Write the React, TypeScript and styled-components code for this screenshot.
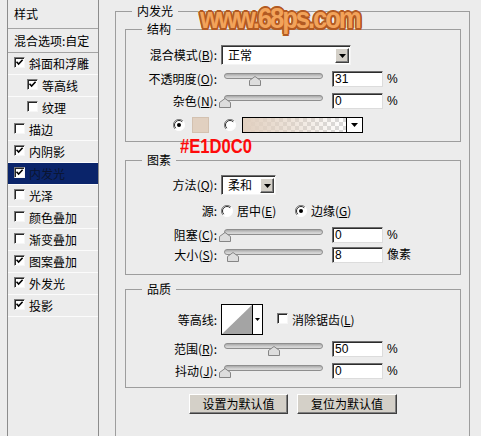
import React from "react";
import styled, { createGlobalStyle } from "styled-components";

const GlobalStyle = createGlobalStyle`
  html, body {
    margin: 0;
    padding: 0;
    background: #ececec;
  }
  body {
    font-family: "Noto Sans CJK SC", "Liberation Sans", sans-serif;
    font-size: 12px;
    color: #000;
  }
`;

const Page = styled.div`
  position: relative;
  display: flex;
  width: 481px;
  height: 436px;
  overflow: hidden;
  background: #ececec;
`;

/* ---------- left style list ---------- */

const StyleList = styled.div`
  margin-left: 7px;
  width: 90px;
  height: 100%;
  flex: none;
  border-left: 1px solid #8c8c8c;
  border-right: 1px solid #8c8c8c;
  display: flex;
  flex-direction: column;
`;

const ListHeader = styled.div<{ $h: number }>`
  height: ${({ $h }) => $h}px;
  display: flex;
  align-items: center;
  padding-left: 6px;
  border-bottom: 1px solid #a4a4a4;
  line-height: 14px;
  white-space: nowrap;
`;

const ListItem = styled.div<{ $sub?: boolean; $active?: boolean }>`
  height: 21px;
  display: flex;
  align-items: center;
  gap: 4px;
  padding-left: ${({ $sub }) => ($sub ? "19px" : "6px")};
  border-bottom: 1px solid #fbfbfb;
  background: ${({ $active }) => ($active ? "#0a246a" : "transparent")};
  color: ${({ $active }) => ($active ? "#0b1430" : "#000")};
  line-height: 14px;
  white-space: nowrap;
`;

/* ---------- basic controls ---------- */

const Box = styled.span`
  position: relative;
  display: inline-flex;
  align-items: center;
  justify-content: center;
  width: 11px;
  height: 11px;
  flex: none;
  box-sizing: border-box;
  background: #fff;
  border: 1px solid;
  border-color: #7a7a7a #f6f6f6 #f6f6f6 #7a7a7a;
  box-shadow: inset 1px 1px 0 #262626;
  margin-top: -2px;
`;

const Checkbox = ({ checked }: { checked: boolean }) => (
  <Box>
    {checked && (
      <svg width="9" height="9" viewBox="0 0 9 9">
        <path d="M1.5 3.8 L3.6 6 L7.6 1.8" stroke="#000" strokeWidth="1.6" fill="none" />
      </svg>
    )}
  </Box>
);

const RadioMark = styled.svg`
  flex: none;
  display: block;
`;

const Radio = ({ checked }: { checked: boolean }) => (
  <RadioMark width="12" height="12" viewBox="0 0 12 12">
    <circle cx="6" cy="6" r="5.5" fill="#fff" />
    <path d="M10 2 A5.6 5.6 0 0 0 2 10" stroke="#7c7c7c" strokeWidth="1" fill="none" />
    <path d="M9.2 2.8 A4.5 4.5 0 0 0 2.8 9.2" stroke="#2b2b2b" strokeWidth="1" fill="none" />
    <path d="M2 10 A5.6 5.6 0 0 0 10 2" stroke="#fdfdfd" strokeWidth="1" fill="none" />
    {checked && <circle cx="6" cy="6" r="2" fill="#000" />}
  </RadioMark>
);

const DownArrow = () => (
  <svg width="7" height="4" viewBox="0 0 7 4">
    <path d="M0 0 H7 L3.5 4 Z" fill="#000" />
  </svg>
);

const SelectBox = styled.div<{ $w: number }>`
  width: ${({ $w }) => $w}px;
  height: 20px;
  flex: none;
  box-sizing: border-box;
  display: flex;
  align-items: stretch;
  background: #fff;
  border: 1px solid;
  border-color: #707070 #f4f4f4 #f4f4f4 #707070;
  box-shadow: inset 1px 1px 0 #303030;
`;

const SelectText = styled.span`
  flex: 1;
  padding-left: 6px;
  display: flex;
  align-items: center;
  line-height: 14px;
`;

const SelectButton = styled.span`
  width: 14px;
  margin: 2px 1px 1px 0;
  box-sizing: border-box;
  display: flex;
  align-items: center;
  justify-content: center;
  background: #d4d0c8;
  border: 1px solid;
  border-color: #fff #404040 #404040 #fff;
  box-shadow: inset -1px -1px 0 #808080;
`;

const Select = ({ width, value }: { width: number; value: string }) => (
  <SelectBox $w={width}>
    <SelectText>{value}</SelectText>
    <SelectButton>
      <DownArrow />
    </SelectButton>
  </SelectBox>
);

const NumberInput = styled.div`
  width: 51px;
  height: 16px;
  flex: none;
  box-sizing: border-box;
  background: #fff;
  border: 1px solid;
  border-color: #6e6e6e #dcdcdc #dcdcdc #6e6e6e;
  box-shadow: inset 1px 1px 0 #2c2c2c;
  padding-left: 2px;
  font-family: "Liberation Sans", Arial, sans-serif;
  font-size: 12px;
  line-height: 14px;
`;

const Unit = styled.span`
  margin-left: 4px;
  line-height: 14px;
  font-family: "Liberation Sans", "Noto Sans CJK SC", sans-serif;
`;

const SliderWrap = styled.div`
  position: relative;
  width: 102px;
  height: 16px;
  flex: none;
  margin-right: 9px;
`;

const Track = styled.div`
  margin: 2px 0 0 3px;
  width: 99px;
  height: 6px;
  box-sizing: border-box;
  border-radius: 3px;
  border: 1px solid #8e8e8e;
  background: linear-gradient(#a8a8a8, #cfcfcf 60%, #dadada);
`;

const Thumb = styled.svg`
  position: absolute;
  top: 5px;
`;

const Slider = ({ frac }: { frac: number }) => (
  <SliderWrap>
    <Track />
    <Thumb width="12" height="10" viewBox="0 0 12 10" style={{ left: 4 + frac * 97 - 6 }}>
      <path d="M0.5 4.5 L6 0.5 L11.5 4.5 V9.5 H0.5 Z" fill="#dddddd" stroke="#858585" />
    </Thumb>
  </SliderWrap>
);

/* ---------- group boxes ---------- */

const EffectPanel = styled.fieldset`
  margin: 4px 0 0 16px;
  padding: 4px 8px 0 9px;
  width: 355px;
  height: 470px;
  flex: none;
  box-sizing: border-box;
  border: 1px solid #9d9d9d;
  min-width: 0;
`;

const Legend = styled.legend<{ $ml: number }>`
  margin-left: ${({ $ml }) => $ml}px;
  padding: 0 5px;
  line-height: 14px;
  font-size: 12px;
`;

const Group = styled.fieldset<{ $mt: number; $pt: number; $pb: number }>`
  margin: ${({ $mt }) => $mt}px 0 0 0;
  padding: ${({ $pt }) => $pt}px 0 ${({ $pb }) => $pb}px 0;
  border: 1px solid #9d9d9d;
  min-width: 0;
`;

const Row = styled.div<{ $h: number; $mt?: number; $pl?: number }>`
  display: flex;
  align-items: center;
  height: ${({ $h }) => $h}px;
  margin-top: ${({ $mt }) => $mt ?? 0}px;
  padding-left: ${({ $pl }) => $pl ?? 0}px;
  white-space: nowrap;
`;

const FieldLabel = styled.span`
  width: 91px;
  flex: none;
  margin-right: 4px;
  text-align: right;
  line-height: 14px;
`;

const OptionText = styled.span<{ $w?: number }>`
  margin-left: 4px;
  line-height: 14px;
  ${({ $w }) => ($w ? `width: ${$w}px;` : "")}
`;

const Swatch = styled.div`
  width: 17px;
  height: 16px;
  margin: 0 15px 0 7px;
  box-sizing: border-box;
  background: #e1d0c0;
  border: 1px solid #d3c1b0;
`;

const GradientBox = styled.div`
  margin-left: 6px;
  width: 121px;
  height: 16px;
  box-sizing: border-box;
  display: flex;
  border: 1px solid #000;
`;

const GradientFill = styled.div`
  flex: 1;
  background:
    linear-gradient(90deg, #e1d0c0 0%, rgba(225, 208, 192, 0.6) 45%, rgba(225, 208, 192, 0) 100%),
    repeating-conic-gradient(#d9d9d9 0 25%, #ffffff 0 50%) 0 0 / 8px 8px;
`;

const GradientArrow = styled.div`
  width: 15px;
  display: flex;
  align-items: center;
  justify-content: center;
  background: #fff;
  border-left: 1px solid #000;
`;

const ContourPicker = styled.div`
  width: 42px;
  height: 31px;
  flex: none;
  box-sizing: border-box;
  display: flex;
  border: 1px solid #000;
  background: #fff;
`;

const ContourArrow = styled.div`
  flex: 1;
  display: flex;
  align-items: center;
  justify-content: center;
  border-left: 1px solid #000;
`;

const ButtonRow = styled.div`
  display: flex;
  justify-content: center;
  gap: 9px;
  margin-top: 6px;
`;

const Button = styled.div<{ $w: number }>`
  width: ${({ $w }) => $w}px;
  height: 20px;
  box-sizing: border-box;
  display: flex;
  align-items: center;
  justify-content: center;
  background: #d4d0c8;
  border: 1px solid;
  border-color: #fff #404040 #404040 #fff;
  box-shadow: inset -1px -1px 0 #808080;
  line-height: 14px;
`;

/* ---------- overlays ---------- */

const Watermark = styled.div`
  position: absolute;
  left: 200px;
  top: 1px;
  font-family: "Liberation Sans", Arial, sans-serif;
  font-weight: 700;
  font-size: 30px;
  letter-spacing: -2.5px;
  line-height: 34px;
  color: #f2a35a;
  -webkit-text-stroke: 3px #fff7ee;
  paint-order: stroke fill;
  transform: scaleX(0.86);
  transform-origin: left top;
  text-shadow: 2px 0 0 #b25a22, -2px 0 0 #b25a22, 0 2px 0 #b25a22, 0 -2px 0 #b25a22,
    1.5px 1.5px 0 #b25a22, -1.5px -1.5px 0 #b25a22, 1.5px -1.5px 0 #b25a22, -1.5px 1.5px 0 #b25a22;
`;

const ColorNote = styled.div`
  position: absolute;
  left: 180px;
  top: 135px;
  font-family: "Liberation Sans", Arial, sans-serif;
  font-weight: 700;
  font-size: 20px;
  line-height: 22px;
  color: #ff0a0a;
  transform: scaleX(0.83);
  transform-origin: left top;
`;

const styleItems = [
  { name: "斜面和浮雕", checked: true },
  { name: "等高线", checked: true, sub: true },
  { name: "纹理", checked: false, sub: true },
  { name: "描边", checked: false },
  { name: "内阴影", checked: true },
  { name: "内发光", checked: true, active: true },
  { name: "光泽", checked: false },
  { name: "颜色叠加", checked: false },
  { name: "渐变叠加", checked: false },
  { name: "图案叠加", checked: true },
  { name: "外发光", checked: true },
  { name: "投影", checked: true },
];

const Key = ({ k }: { k: string }) => (
  <>
    (<u>{k}</u>):
  </>
);

export default function App() {
  return (
    <Page>
      <GlobalStyle />
      <StyleList>
        <ListHeader $h={28}>样式</ListHeader>
        <ListHeader $h={23}>混合选项:自定</ListHeader>
        {styleItems.map((item) => (
          <ListItem key={item.name} $sub={item.sub} $active={item.active}>
            <Checkbox checked={item.checked} />
            <span>{item.name}</span>
          </ListItem>
        ))}
      </StyleList>

      <EffectPanel>
        <Legend $ml={7}>内发光</Legend>

        <Group $mt={0} $pt={9} $pb={8}>
          <Legend $ml={16}>结构</Legend>
          <Row $h={20}>
            <FieldLabel>
              混合模式<Key k="B" />
            </FieldLabel>
            <Select width={130} value="正常" />
          </Row>
          <Row $h={16} $mt={6}>
            <FieldLabel>
              不透明度<Key k="O" />
            </FieldLabel>
            <Slider frac={0.31} />
            <NumberInput>31</NumberInput>
            <Unit>%</Unit>
          </Row>
          <Row $h={16} $mt={6}>
            <FieldLabel>
              杂色<Key k="N" />
            </FieldLabel>
            <Slider frac={0} />
            <NumberInput>0</NumberInput>
            <Unit>%</Unit>
          </Row>
          <Row $h={16} $mt={8} $pl={47}>
            <Radio checked />
            <Swatch />
            <Radio checked={false} />
            <GradientBox>
              <GradientFill />
              <GradientArrow>
                <DownArrow />
              </GradientArrow>
            </GradientBox>
          </Row>
        </Group>

        <Group $mt={11} $pt={8} $pb={11}>
          <Legend $ml={16}>图素</Legend>
          <Row $h={20}>
            <FieldLabel>
              方法<Key k="Q" />
            </FieldLabel>
            <Select width={55} value="柔和" />
          </Row>
          <Row $h={16} $mt={8}>
            <FieldLabel>源:</FieldLabel>
            <Radio checked={false} />
            <OptionText $w={58}>
              居中(<u>E</u>)
            </OptionText>
            <Radio checked />
            <OptionText>
              边缘(<u>G</u>)
            </OptionText>
          </Row>
          <Row $h={16} $mt={8}>
            <FieldLabel>
              阻塞<Key k="C" />
            </FieldLabel>
            <Slider frac={0} />
            <NumberInput>0</NumberInput>
            <Unit>%</Unit>
          </Row>
          <Row $h={16} $mt={4}>
            <FieldLabel>
              大小<Key k="S" />
            </FieldLabel>
            <Slider frac={0.085} />
            <NumberInput>8</NumberInput>
            <Unit>像素</Unit>
          </Row>
        </Group>

        <Group $mt={7} $pt={8} $pb={8}>
          <Legend $ml={16}>品质</Legend>
          <Row $h={31}>
            <FieldLabel>等高线:</FieldLabel>
            <ContourPicker>
              <svg width="30" height="29" viewBox="0 0 30 29">
                <path d="M0 29 L30 0 V29 Z" fill="#a4a4a4" />
              </svg>
              <ContourArrow>
                <svg width="5" height="3" viewBox="0 0 5 3">
                  <path d="M0 0 H5 L2.5 3 Z" fill="#000" />
                </svg>
              </ContourArrow>
            </ContourPicker>
            <Row $h={16} $pl={14}>
              <Checkbox checked={false} />
              <OptionText>
                消除锯齿(<u>L</u>)
              </OptionText>
            </Row>
          </Row>
          <Row $h={16} $mt={6}>
            <FieldLabel>
              范围<Key k="R" />
            </FieldLabel>
            <Slider frac={0.5} />
            <NumberInput>50</NumberInput>
            <Unit>%</Unit>
          </Row>
          <Row $h={16} $mt={6}>
            <FieldLabel>
              抖动<Key k="J" />
            </FieldLabel>
            <Slider frac={0} />
            <NumberInput>0</NumberInput>
            <Unit>%</Unit>
          </Row>
        </Group>

        <ButtonRow>
          <Button $w={99}>设置为默认值</Button>
          <Button $w={100}>复位为默认值</Button>
        </ButtonRow>
      </EffectPanel>

      <Watermark>www.68ps.com</Watermark>
      <ColorNote>#E1D0C0</ColorNote>
    </Page>
  );
}
